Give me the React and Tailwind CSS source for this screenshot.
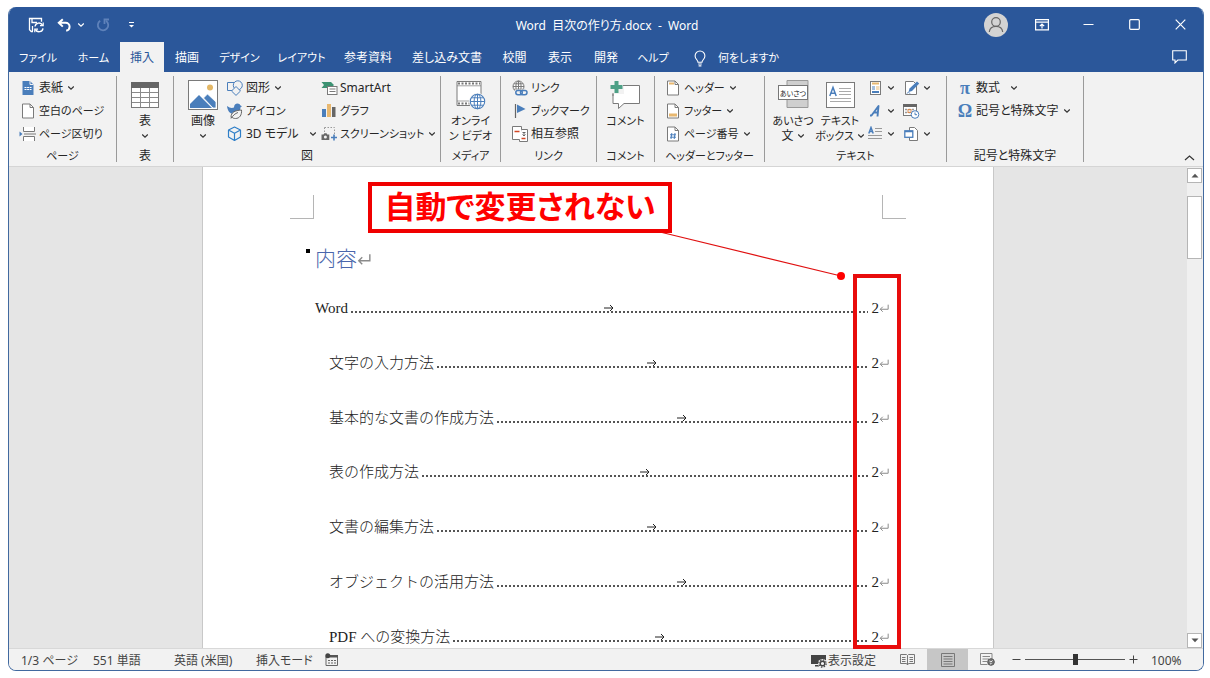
import React from "react";

const BLUE = "#4a7ebb";
const GREY = "#7a7a7a";

function Svg({ w = 16, h = 16, className = "", children, vb }) {
  return (
    <svg width={w} height={h} viewBox={vb || `0 0 ${w} ${h}`} fill="none" aria-hidden="true" className={`shrink-0 ${className}`}>
      {children}
    </svg>
  );
}

function Chevron() {
  return (
    <Svg w={8} h={6}>
      <path d="M1.2 1.5 4 4.2 6.8 1.5" stroke="#333" strokeWidth="1.2" />
    </Svg>
  );
}

/* Kana-heavy labels are set one step smaller so they stay compact. */
const labelSize = (text) => (/ー|^[ァ-ヶぁ-ん ]+$/.test(text) ? "text-[11px]" : "text-[12px]");

/* ---------- title bar icons ---------- */
const SaveIcon = () => (
  <Svg w={17} h={16}>
    <path d="M5 14.5H3.2L1.5 12.8V1.5h12v3.200M4 1.5v4h5M4.500 14V9" stroke="#fff" strokeWidth="1.3" />
    <path d="M7 9.500a4 4 0 0 1 7.500-1.300M15 11.300a4 4 0 0 1-7.500 1.300" stroke="#fff" strokeWidth="1.400" />
    <path d="M15.200 5.500v3.200h-3.200M6.800 15.300v-3.200H10" stroke="#fff" strokeWidth="1.200" />
  </Svg>
);
const UndoIcon = () => (
  <Svg w={15} h={14}>
    <path d="M5.8 1.2 1.8 4.8l4 3.8M2 4.8h6.6a4 4 0 0 1 4 4c0 2.2-1.4 3.600-3.400 4" stroke="#fff" strokeWidth="2" />
  </Svg>
);
const RedoIcon = () => (
  <Svg w={14} h={14}>
    <path d="M4.200 2.800A5.200 5.200 0 1 0 10.200 3M13 1.500H8.500V6" stroke="#5f82ba" strokeWidth="1.800" />
  </Svg>
);
const CustomizeIcon = () => (
  <Svg w={7} h={8}>
    <path d="M1 1.500h5" stroke="#fff" strokeWidth="1.200" />
    <path d="M1 4h5L3.500 6.600z" fill="#fff" />
  </Svg>
);
const UserIcon = () => (
  <Svg w={24} h={24}>
    <circle cx="12" cy="12" r="12" fill="#d3d3d3" />
    <circle cx="12" cy="9" r="4.300" stroke="#666" strokeWidth="1.200" />
    <path d="M5.300 19c.4-3.500 3-5.600 6.700-5.600s6.300 2.100 6.700 5.600" stroke="#666" strokeWidth="1.200" />
  </Svg>
);
const RibbonOptIcon = () => (
  <Svg w={14} h={12}>
    <path d="M.6.6h12.800v10.300H.6zM.6 3.200h12.800M7 9.500v-4M4.800 7.200 7 5l2.200 2.200" stroke="#fff" strokeWidth="1.200" />
  </Svg>
);
const BulbIcon = () => (
  <Svg w={12} h={17}>
    <path d="M4 12.200c0-2-2.900-3.200-2.900-6.300a4.900 4.900 0 0 1 9.800 0c0 3.100-2.900 4.300-2.900 6.300zM4.200 14h3.600M4.600 15.900h2.800" stroke="#fff" strokeWidth="1.100" />
  </Svg>
);
const CommentOutline = () => (
  <Svg w={15} h={14}>
    <path d="M.7.7h13.600v9.300H5.800L3 12.900V10H.7z" stroke="#fff" strokeWidth="1.100" />
  </Svg>
);

/* ---------- ribbon icons ---------- */
const CoverIcon = () => (
  <Svg w={14} h={16}>
    <path d="M1.500 1h7.500l3.500 3.500V15h-11z" fill={BLUE} />
    <path d="M9 1v3.500h3.500" stroke="#f2f2f2" strokeWidth="1" />
    <path d="M3.500 7.500h7M3.500 9.500h7" stroke="#fff" strokeWidth="1" strokeDasharray="2 .6" />
  </Svg>
);
const PageShape = ({ children }) => (
  <Svg w={14} h={16}>
    <path d="M1.500 1h7.500l3.500 3.500V15h-11z" fill="#fff" stroke={GREY} />
    <path d="M9 1v3.500h3.500" stroke={GREY} />
    {children}
  </Svg>
);
const BreakIcon = () => (
  <Svg w={18} h={16}>
    <path d="M4.500 1v4.500h11V1M4.500 15v-4.500h11V15" fill="#fff" stroke={GREY} />
    <path d="M5 8h12" stroke={GREY} />
    <path d="M.5 5.500 3.500 8l-3 2.500z" fill={BLUE} />
  </Svg>
);
const TableIcon = () => (
  <Svg w={28} h={26}>
    <rect x=".5" y=".5" width="27" height="25" fill="#fff" stroke={GREY} />
    <path d="M0 0h28v6H0z" fill="#666" />
    <path d="M1 10.500h26M1 15.500h26M1 20.500h26M9.500 6v19M18.500 6v19" stroke="#8a8a8a" />
  </Svg>
);
const PictureIcon = () => (
  <Svg w={30} h={30}>
    <rect x=".5" y=".5" width="29" height="29" fill="#fff" stroke={GREY} />
    <circle cx="22" cy="7.500" r="3" fill="#e3b766" />
    <path d="M2 28V24l9-9 13 13z" fill={BLUE} />
    <path d="m15.500 18 4-4 8.500 8v6h-3z" fill={BLUE} stroke="#fff" strokeWidth=".8" />
  </Svg>
);
const ShapesIcon = () => (
  <Svg w={16} h={16}>
    <path d="M.5 2.500h8v8h-8z" stroke={BLUE} />
    <circle cx="10.800" cy="5.300" r="4.500" fill="#f2f2f2" stroke={BLUE} />
    <path d="m9 6.500 4.500 4.500L9 15.400 4.500 11z" fill="#f2f2f2" stroke={BLUE} />
  </Svg>
);
const IconsIcon = () => (
  <Svg w={16} h={16}>
    <path d="M0 3c2.500 2 5 2.300 7 1.500C7 2 8.500.5 10.500.5c1.500 0 2.500.8 3 2l1.500.8-1.500 1c0 4-3 6.700-6.500 6.700C3 11 .500 8 0 3z" fill={BLUE} />
    <path d="M4 14.500C4 9 8 7.500 14.500 7c.5 5-2 8.500-6 8.500-1.500 0-3-.4-3.500-1.500zM4 15.500c2-3 4-5 7-6" fill="#f2f2f2" stroke="#666" />
  </Svg>
);
const CubeIcon = () => (
  <Svg w={16} h={16}>
    <path d="M7.500 1 13.500 4v7l-6 3.500-6-3.500V4zM1.500 4l6 3.300 6-3.300M7.500 7.300v7" stroke="#2f7fc8" strokeWidth="1.200" strokeLinejoin="round" />
  </Svg>
);
const SmartArtIcon = () => (
  <Svg w={17} h={14}>
    <path d="M.5 1h9.500l3 3-3 3H.5L3 4z" fill="#3c9272" />
    <rect x="6.500" y="5.500" width="9.500" height="8" fill="#fff" stroke={GREY} />
    <path d="M8.500 8h6M8.500 10.500h6" stroke={GREY} />
  </Svg>
);
const ChartIcon = () => (
  <Svg w={16} h={16}>
    <path d="M1 6h4v8H1z" fill={BLUE} />
    <path d="M6 1h4v13H6z" fill="#e8b870" />
    <path d="M11 4h3.500v10H11z" fill="#666" />
  </Svg>
);
const ShotIcon = () => (
  <Svg w={17} h={16}>
    <path d="M3.500 1.500h10v9" stroke="#999" strokeDasharray="1.500 1.500" />
    <path d="M3.500 1.500v6" stroke="#999" strokeDasharray="1.500 1.500" />
    <path d="M.5 8.500h2l.8-1.200h2.200l.8 1.200h2v5.500H.5z" fill="#666" />
    <circle cx="4.400" cy="11" r="1.500" fill="#f2f2f2" />
    <path d="M13 8.500v6M10 11.500h6" stroke={BLUE} strokeWidth="1.600" />
  </Svg>
);
const VideoIcon = () => (
  <Svg w={30} h={30}>
    <path d="M1 1.500h24v24H1z" fill="#fff" stroke={GREY} />
    <path d="M2 3.500h22M2 23.500h12" stroke="#777" strokeWidth="2" strokeDasharray="2 1.500" />
    <path d="M1 5.800h24M1 21h12" stroke={GREY} strokeWidth=".7" />
    <circle cx="21.500" cy="21.500" r="8.500" fill="#f2f2f2" />
    <circle cx="21.500" cy="21.500" r="7.200" fill="#fff" stroke={BLUE} strokeWidth="1.100" />
    <ellipse cx="21.500" cy="21.500" rx="3.400" ry="7.200" stroke={BLUE} />
    <path d="M14.500 21.500h14M15.500 17.800h12M15.500 25.200h12M21.500 14.500v14" stroke={BLUE} />
  </Svg>
);
const LinkIcon = () => (
  <Svg w={16} h={16}>
    <circle cx="6.500" cy="6.500" r="5.500" fill="#fff" stroke={GREY} />
    <ellipse cx="6.500" cy="6.500" rx="2.600" ry="5.500" stroke={GREY} />
    <path d="M1 6.500h11M2 3.800h9M2 9.200h9M6.500 1v11" stroke={GREY} />
    <path d="M3 9.500h13v6H3z" fill="#f2f2f2" />
    <rect x="3.800" y="10.500" width="6.500" height="4.200" rx="2.100" stroke={BLUE} strokeWidth="1.500" />
    <rect x="8.500" y="10.500" width="6.500" height="4.200" rx="2.100" stroke={BLUE} strokeWidth="1.500" />
  </Svg>
);
const FlagIcon = () => (
  <Svg w={16} h={16}>
    <path d="M3.500 1v14" stroke="#666" strokeWidth="1.200" />
    <path d="M5 1.500 13.500 6 5 10z" fill={BLUE} />
  </Svg>
);
const CrossRefIcon = () => (
  <Svg w={17} h={16}>
    <path d="M.5.5h9v13h-9z" fill="#fff" stroke={GREY} />
    <path d="M9.500 3.500h6v12h-8v-2" fill="#fff" stroke={GREY} />
    <path d="M2.500 5.500h5M9.500 12.500h4" stroke="#d24726" strokeWidth="1.600" />
    <path d="M10.500 6.500h3M12 6v3.500M10.500 8.500 12 10l1.500-1.500" stroke="#666" />
  </Svg>
);
const CommentIcon = () => (
  <Svg w={31} h={30}>
    <path d="M3 5.500h26.500v18H14l-5.500 5v-5H3z" fill="#fff" stroke={GREY} />
    <path d="M0 0h14v14H0z" fill="#f2f2f2" />
    <path d="M6.500 1v12M.5 7h12" stroke="#4ea086" strokeWidth="4" />
    <path d="M13 5.500h2M3 13v3" stroke={GREY} />
  </Svg>
);
const GreetingIcon = () => (
  <Svg w={31} h={29}>
    <path d="M9 .5h21v27H9z" fill="#cfcfcf" stroke="#999" />
    <rect x=".5" y="5.500" width="29" height="14" fill="#fff" stroke="#777" />
    <text x="15" y="15.500" textAnchor="middle" fontSize="7" fill="#222" fontFamily="Noto Sans CJK JP, sans-serif">あいさつ</text>
  </Svg>
);
const TextBoxIcon = () => (
  <Svg w={29} h={26}>
    <rect x=".5" y=".5" width="28" height="25" fill="#fff" stroke={GREY} />
    <path d="M3.800 14 7 5.500 10.200 14M4.800 11.200h4.400" stroke={BLUE} strokeWidth="1.500" />
    <path d="M13 6.500h12M13 9.500h12M13 12.500h12M4 16.500h21M4 19.500h21" stroke="#aaa" />
  </Svg>
);
const QuickPartsIcon = () => (
  <Svg w={16} h={16}>
    <rect x="2.500" y="1.500" width="10" height="13" fill="#fff" stroke={GREY} />
    <path d="M4 3.500h7" stroke="#e8b870" strokeWidth="2" />
    <path d="M4 7h3M4 9h3" stroke={BLUE} />
    <path d="M8 7h3.500M8 9h3.500" stroke="#e8b870" />
    <path d="M4 12h7" stroke={BLUE} strokeWidth="2" />
  </Svg>
);
const WordArtIcon = () => (
  <Svg w={16} h={16}>
    <path d="M2 12.500h1.500L10.500 3 9.500 13.500M5.500 9.500h5" stroke={BLUE} strokeWidth="1.900" strokeLinejoin="round" />
  </Svg>
);
const DropCapIcon = () => (
  <Svg w={17} h={16}>
    <path d="M1.800 7.500 4 1.500l2.200 6M2.500 5.500h3" stroke={BLUE} strokeWidth="1.500" />
    <path d="M8 2.500h7M8 5.500h7M1 9.500h14M1 12.500h14" stroke="#999" />
  </Svg>
);
const SignatureIcon = () => (
  <Svg w={16} h={16}>
    <path d="M1.500 1.500h8l3 3v10h-11z" fill="#fff" stroke={GREY} />
    <path d="m4.500 12 1-3.500L13 1.500l2.200 2L8 11z" fill={BLUE} />
    <path d="M3 13.500c1-2 2-1 3 0" stroke={BLUE} />
  </Svg>
);
const DateIcon = () => (
  <Svg w={17} h={16}>
    <rect x=".5" y="1.500" width="13" height="11" fill="#fff" stroke={GREY} />
    <path d="M0 1h14v3H0z" fill="#666" />
    <path d="M2 6.500h10M2 9.500h6" stroke="#999" strokeDasharray="2 1.500" strokeWidth="1.500" />
    <rect x="5" y="6.500" width="3" height="3" stroke="#d98a50" />
    <circle cx="12" cy="11.500" r="3.800" fill="#fff" stroke={BLUE} />
    <path d="M12 9.500v2.200h2" stroke={BLUE} />
  </Svg>
);
const ObjectIcon = () => (
  <Svg w={16} h={16}>
    <path d="M5.500 1.500h5l3 3v10h-8z" fill="#fff" stroke={GREY} />
    <rect x=".8" y="4.800" width="8" height="6.500" fill="#fff" stroke={BLUE} strokeWidth="1.300" />
    <path d="M1 5.500h8" stroke={BLUE} strokeWidth="1.500" />
  </Svg>
);
const Glyph = ({ children }) => (
  <span className="w-4 text-center font-['Liberation_Serif',serif] text-[18px] leading-4 font-bold text-[#4a7ebb]">{children}</span>
);

/* ---------- ribbon building blocks ---------- */
function Group({ label, className, children }) {
  return (
    <section aria-label={label} className={`flex shrink-0 flex-col justify-between border-r border-[#9a9a9a] ${className}`}>
      <div className="flex h-[70px]">{children}</div>
      <div className={`flex h-3 items-center justify-center leading-3 whitespace-nowrap ${labelSize(label)}`}>{label}</div>
    </section>
  );
}
function Cmd({ icon, children, menu, wide }) {
  return (
    <button type="button" className={`flex h-[23px] items-center gap-[2px] whitespace-nowrap ${labelSize(children)}`}>
      <span className="flex w-[18px] justify-center">{icon}</span>
      {children}
      {menu && <span className={wide ? "pl-2" : "pl-[2px]"}><Chevron /></span>}
    </button>
  );
}
function Big({ icon, lines, menu, inline, className = "" }) {
  return (
    <button type="button" className={`flex shrink-0 flex-col items-center ${className}`}>
      <span className="flex h-[37px] items-center justify-center">{icon}</span>
      {lines.map((l, i) => (
        <span key={l} className={`flex h-[15px] items-center gap-[3px] leading-[15px] whitespace-nowrap ${labelSize(l)}`}>
          {l}
          {inline && i === lines.length - 1 && <Chevron />}
        </span>
      ))}
      {menu && <span className="flex h-[15px] items-center"><Chevron /></span>}
    </button>
  );
}
function IconMenu({ label, icon, menu = true }) {
  return (
    <button type="button" aria-label={label} className="flex h-[23px] items-center gap-[3px]">
      <span className="flex w-[17px] justify-center">{icon}</span>
      {menu && <Chevron />}
    </button>
  );
}

const TABS = [
  ["ファイル", "w-[58px]"],
  ["ホーム", "w-[53px]"],
  ["挿入", "w-[44px]"],
  ["描画", "w-[46px]"],
  ["デザイン", "w-[59px]"],
  ["レイアウト", "w-[65px]"],
  ["参考資料", "w-[68px]"],
  ["差し込み文書", "w-[90px]"],
  ["校閲", "w-[45px]"],
  ["表示", "w-[46px]"],
  ["開発", "w-[46px]"],
  ["ヘルプ", "w-[48px]"],
];

const TOC = [
  "Word",
  "文字の入力方法",
  "基本的な文書の作成方法",
  "表の作成方法",
  "文書の編集方法",
  "オブジェクトの活用方法",
  "PDF への変換方法",
];

function ReturnMark({ size, className = "" }) {
  return (
    <Svg w={size} h={size} vb="0 0 12 12" className={className}>
      <path d="M11 2v5.500H1.500M4.500 4.500l-3 3 3 3" stroke="#8a8a8a" strokeWidth="1.200" />
    </Svg>
  );
}

function TitleBar() {
  return (
    <header className="bg-[#2b579a] text-white">
      <div className="flex h-[35px] items-center">
        <div className="flex flex-1 items-center pl-[19px]">
          <button type="button" aria-label="上書き保存"><SaveIcon /></button>
          <button type="button" aria-label="元に戻す" className="ml-3"><UndoIcon /></button>
          <button type="button" aria-label="元に戻すの一覧" className="ml-[5px]">
            <Svg w={8} h={6}><path d="M1.200 1.500 4 4.200 6.800 1.500" stroke="#fff" strokeWidth="1.200" /></Svg>
          </button>
          <button type="button" aria-label="やり直し" className="ml-[11px]"><RedoIcon /></button>
          <button type="button" aria-label="クイック アクセスのカスタマイズ" className="ml-[18px]"><CustomizeIcon /></button>
        </div>
        <h1 className="pt-[3px] whitespace-pre">Word  目次の作り方.docx  -  Word</h1>
        <div className="flex flex-1 items-center justify-end pr-[17px]">
          <button type="button" aria-label="アカウント" className="mr-[27px]"><UserIcon /></button>
          <button type="button" aria-label="リボンの表示オプション" className="mr-[34px]"><RibbonOptIcon /></button>
          <button type="button" aria-label="最小化" className="mr-[35px]">
            <Svg w={11} h={11}><path d="M.5 5.500h10" stroke="#fff" strokeWidth="1.200" /></Svg>
          </button>
          <button type="button" aria-label="最大化" className="mr-[35px]">
            <Svg w={11} h={11}><rect x=".7" y=".7" width="9.600" height="9.600" rx="1" stroke="#fff" strokeWidth="1.200" /></Svg>
          </button>
          <button type="button" aria-label="閉じる">
            <Svg w={11} h={11}><path d="m.7.7 9.600 9.600M10.300.7.7 10.300" stroke="#fff" strokeWidth="1.200" /></Svg>
          </button>
        </div>
      </div>
      <nav aria-label="リボン タブ" className="flex h-[30px] items-stretch">
        {TABS.map(([name, w]) => (
          <button
            key={name}
            type="button"
            className={`${w} shrink-0 pt-[2px] whitespace-nowrap ${labelSize(name)} ${name === "挿入" ? "bg-[#f2f2f2] text-[#2b579a]" : ""}`}
          >
            {name}
          </button>
        ))}
        <button type="button" className="ml-[17px] flex items-center gap-3 pt-[2px] text-[11px] whitespace-nowrap"><BulbIcon />何をしますか</button>
        <button type="button" aria-label="コメント" className="mr-4 ml-auto"><CommentOutline /></button>
      </nav>
    </header>
  );
}

function Ribbon() {
  return (
    <div className="flex h-[95px] border-b border-[#d5d5d5] bg-[#f2f2f2] pt-1 pb-1 text-[#262626]">
      <Group label="ページ" className="w-[108px]">
        <div className="flex flex-col pl-[10px]">
          <Cmd icon={<CoverIcon />} menu>表紙</Cmd>
          <Cmd icon={<PageShape />}>空白のページ</Cmd>
          <Cmd icon={<BreakIcon />}>ページ区切り</Cmd>
        </div>
      </Group>
      <Group label="表" className="w-[57px]">
        <Big icon={<TableIcon />} lines={["表"]} menu className="w-full" />
      </Group>
      <Group label="図" className="w-[267px]">
        <Big icon={<PictureIcon />} lines={["画像"]} menu className="w-[52px] pl-[6px]" />
        <div className="flex w-[94px] flex-col">
          <Cmd icon={<ShapesIcon />} menu>図形</Cmd>
          <Cmd icon={<IconsIcon />}>アイコン</Cmd>
          <Cmd icon={<CubeIcon />} menu wide>3D モデル</Cmd>
        </div>
        <div className="flex flex-col">
          <Cmd icon={<SmartArtIcon />}>SmartArt</Cmd>
          <Cmd icon={<ChartIcon />}>グラフ</Cmd>
          <Cmd icon={<ShotIcon />} menu>スクリーンショット</Cmd>
        </div>
      </Group>
      <Group label="メディア" className="w-[60px]">
        <Big icon={<VideoIcon />} lines={["オンライ", "ン ビデオ"]} className="w-full" />
      </Group>
      <Group label="リンク" className="w-[96px]">
        <div className="flex flex-col pl-[10px]">
          <Cmd icon={<LinkIcon />}>リンク</Cmd>
          <Cmd icon={<FlagIcon />}>ブックマーク</Cmd>
          <Cmd icon={<CrossRefIcon />}>相互参照</Cmd>
        </div>
      </Group>
      <Group label="コメント" className="w-[58px]">
        <Big icon={<CommentIcon />} lines={["コメント"]} className="w-full" />
      </Group>
      <Group label="ヘッダーとフッター" className="w-[110px]">
        <div className="flex flex-col pl-[9px]">
          <Cmd icon={<PageShape><path d="M3 3.500h5" stroke="#e8b870" strokeWidth="2" /></PageShape>} menu>ヘッダー</Cmd>
          <Cmd icon={<PageShape><path d="M3 12h8" stroke="#e8b870" strokeWidth="3" /></PageShape>} menu>フッター</Cmd>
          <Cmd icon={<PageShape><path d="M5.800 7 5 13M9 7l-.8 6M4 8.800h6M4 11.200h6" stroke={BLUE} /></PageShape>} menu>ページ番号</Cmd>
        </div>
      </Group>
      <Group label="テキスト" className="w-[182px]">
        <Big icon={<GreetingIcon />} lines={["あいさつ", "文"]} inline className="w-[52px] pl-1" />
        <Big icon={<TextBoxIcon />} lines={["テキスト", "ボックス"]} inline className="w-[46px]" />
        <div className="ml-1 flex w-[36px] flex-col">
          <IconMenu label="クイック パーツ" icon={<QuickPartsIcon />} />
          <IconMenu label="ワードアート" icon={<WordArtIcon />} />
          <IconMenu label="ドロップ キャップ" icon={<DropCapIcon />} />
        </div>
        <div className="flex flex-col">
          <IconMenu label="署名欄" icon={<SignatureIcon />} />
          <IconMenu label="日付と時刻" icon={<DateIcon />} menu={false} />
          <IconMenu label="オブジェクト" icon={<ObjectIcon />} />
        </div>
      </Group>
      <Group label="記号と特殊文字" className="w-[137px]">
        <div className="flex flex-col pl-[9px]">
          <Cmd icon={<Glyph>π</Glyph>} menu wide>数式</Cmd>
          <Cmd icon={<Glyph>Ω</Glyph>} menu>記号と特殊文字</Cmd>
        </div>
      </Group>
      <button type="button" aria-label="リボンを折りたたむ" className="mr-2 ml-auto self-end">
        <Svg w={11} h={8}><path d="m1 6 4.500-4L10 6" stroke="#333" strokeWidth="1.200" /></Svg>
      </button>
    </div>
  );
}

function Page() {
  return (
    <article className="flex w-[792px] flex-col overflow-hidden border-x border-[#c8c8c8] bg-white font-['Liberation_Serif','Noto_Sans_CJK_JP',serif] text-[#222] [font-feature-settings:normal]">
      <div className="flex shrink-0 justify-between px-[87px] pt-[28px]">
        <span className="size-6 border-r border-b border-[#b5b5b5]" />
        <span className="size-6 border-b border-l border-[#b5b5b5]" />
      </div>
      <div className="mt-6 flex h-8 shrink-0 items-center pl-[103px]">
        <span className="mr-[5px] size-1 -translate-y-2 bg-black" />
        <h2 className="text-[21px] leading-8 font-light text-[#4a66ac]">内容</h2>
        <ReturnMark size={14} />
      </div>
      <ol className="mt-[6px] grid h-[383px] shrink-0 grid-rows-7 pr-[104px] pl-[112px] text-[15px] leading-5">
        {TOC.map((t, i) => (
          <li key={t} className={`flex items-center ${i ? "pl-[14px] font-light" : ""}`}>
            <span className="whitespace-nowrap">{t}</span>
            <span className="mr-1 ml-[3px] flex h-[10px] flex-1 items-center justify-center bg-[linear-gradient(to_right,#555_2px,transparent_2px)] bg-[length:4px_2px] bg-bottom-left bg-repeat-x">
              <Svg w={10} h={8}><path d="M0 4h9M6 1l3 3-3 3" stroke="#222" /></Svg>
            </span>
            <span>2</span>
            <ReturnMark size={10} />
          </li>
        ))}
      </ol>
    </article>
  );
}

function Annotations() {
  return (
    <div className="pointer-events-none absolute inset-y-0 left-1/2 z-10 w-[792px] -translate-x-1/2">
      <svg className="absolute top-0 left-0" width="792" height="482" viewBox="0 0 792 482" aria-hidden="true">
        <path d="M458 65 639 109" stroke="#e01010" strokeWidth="1.200" />
        <circle cx="639" cy="109" r="4" fill="#f00" />
      </svg>
      <p className="absolute top-[15px] left-[166px] flex h-[51px] w-[304px] items-center justify-center border-4 border-[#f00000] bg-white pb-1 text-[31px] leading-10 font-bold whitespace-nowrap text-[#ff0000]">
        自動で変更されない
      </p>
      <div className="absolute top-[107px] -bottom-px left-[651px] w-12 border-4 border-[#e80c0c]" />
    </div>
  );
}

function ScrollBar() {
  const btn = "flex h-[15px] w-[15px] items-center justify-center border border-[#b5b5b5] bg-white";
  return (
    <div className="flex w-4 shrink-0 flex-col bg-[#f0f0f0]">
      <button type="button" aria-label="上へスクロール" className={btn + " mt-px"}>
        <Svg w={8} h={5}><path d="M.5 4.500h7L4 .8z" fill="#555" /></Svg>
      </button>
      <div className="mt-[13px] h-[63px] w-[15px] border border-[#b5b5b5] bg-white" />
      <button type="button" aria-label="下へスクロール" className={btn + " mt-auto"}>
        <Svg w={8} h={5}><path d="M.5.5h7L4 4.200z" fill="#555" /></Svg>
      </button>
    </div>
  );
}

function StatusBar() {
  return (
    <footer className="flex h-[22px] shrink-0 items-center border-t border-[#d8d8d8] bg-[#f2f2f2] pl-3 whitespace-nowrap text-[#444]">
      <button type="button" className="w-[72px] pt-[2px] text-left">1/3 ページ</button>
      <button type="button" className="w-[81px] pt-[2px] text-left">551 単語</button>
      <button type="button" className="w-[82px] pt-[2px] text-left">英語 (米国)</button>
      <button type="button" className="w-[69px] pt-[2px] text-left">挿入モード</button>
      <button type="button" aria-label="マクロの記録">
        <Svg w={13} h={13}>
          <path d="M1 3.500h11.500v9H1z" stroke="#666" />
          <path d="M5 2h8v2.500H5z" fill="#555" />
          <circle cx="2.800" cy="2.800" r="2.500" fill="#444" />
          <path d="M3 7.500h8M3 10h8" stroke="#666" strokeDasharray="2 1" />
        </Svg>
      </button>
      <button type="button" className="ml-auto flex items-center gap-px pt-[2px]">
        <Svg w={16} h={14}>
          <path d="M0 1h15v9H0zM4 11h4v1.500H4z" fill="#444" />
          <circle cx="11.500" cy="9.500" r="4.500" fill="#f2f2f2" />
          <circle cx="11.500" cy="9.500" r="2.300" stroke="#444" strokeWidth="1.400" />
          <circle cx="11.500" cy="9.500" r="3.700" stroke="#444" strokeWidth="1.200" strokeDasharray="1.500 1.400" />
        </Svg>
        表示設定
      </button>
      <button type="button" aria-label="閲覧モード" className="ml-6">
        <Svg w={15} h={13}>
          <path d="M.5 1.500h6l1 1 1-1h6v9h-6l-1 1.500-1-1.500h-6zM7.500 2.500V12M2 4.500h3.500M2 6.500h3.500M2 8.500h3.500M9.500 4.500H13M9.500 6.500H13M9.500 8.500H13" stroke="#777" />
        </Svg>
      </button>
      <button type="button" aria-label="印刷レイアウト" className="ml-3 flex h-full w-[41px] items-center justify-center bg-[#c6c6c6]">
        <Svg w={14} h={14}><path d="M.5.5h13v13H.5zM2.500 3.500h9M2.500 6h9M2.500 8.500h9M2.500 11h9" stroke="#777" /></Svg>
      </button>
      <button type="button" aria-label="Web レイアウト" className="ml-3">
        <Svg w={15} h={13}>
          <path d="M12 6V.5H.5v11h7M2.500 3.500H10M2.500 6H9M2.500 8.500H7" stroke="#888" />
          <circle cx="11" cy="9" r="3.300" fill="#777" stroke="#555" />
          <path d="M9.500 8 11 9l1.500-1.500M10 11l1.500-.5" stroke="#eee" />
        </Svg>
      </button>
      <button type="button" aria-label="縮小" className="ml-[17px]">
        <Svg w={9} h={9}><path d="M.5 4.500h8" stroke="#444" /></Svg>
      </button>
      <input
        type="range"
        aria-label="ズーム"
        min="0"
        max="100"
        defaultValue="50"
        className="ml-1 h-3 w-[100px] appearance-none bg-[linear-gradient(#555,#555)] bg-[length:100%_1px] bg-center bg-no-repeat [&::-webkit-slider-thumb]:h-[11px] [&::-webkit-slider-thumb]:w-[5px] [&::-webkit-slider-thumb]:appearance-none [&::-webkit-slider-thumb]:bg-[#333]"
      />
      <button type="button" aria-label="拡大" className="ml-1">
        <Svg w={9} h={9}><path d="M.5 4.500h8M4.500.5v8" stroke="#444" /></Svg>
      </button>
      <button type="button" className="mr-[19px] ml-[13px] w-[33px] pt-[2px] text-left">100%</button>
    </footer>
  );
}

export default function App() {
  return (
    <div className="flex h-screen flex-col bg-white pt-[7px] pr-[6px] pb-[7px] pl-2 font-['Noto_Sans','Noto_Sans_CJK_JP',sans-serif] text-[12px] leading-4 [font-feature-settings:'palt']">
      <div className="flex min-h-0 flex-1 flex-col overflow-hidden rounded-lg border border-t-0 border-[#41699f]">
        <TitleBar />
        <Ribbon />
        <main className="relative flex min-h-0 flex-1 bg-[#e5e5e5]">
          <div className="relative flex flex-1 justify-center">
            <Page />
            <Annotations />
          </div>
          <ScrollBar />
        </main>
        <StatusBar />
      </div>
    </div>
  );
}
